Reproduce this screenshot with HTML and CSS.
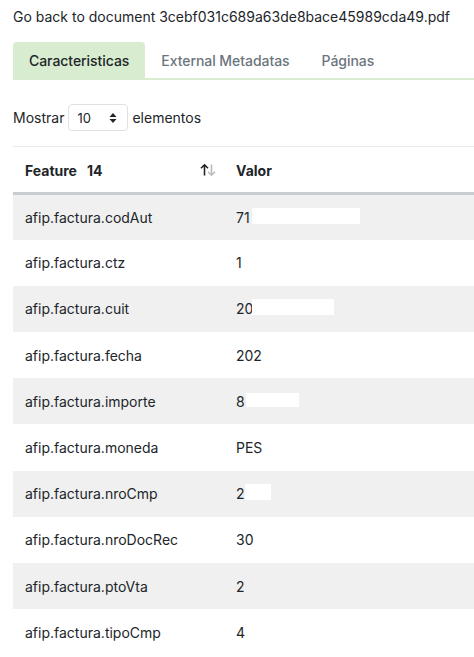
FILE: index.html
```html
<!DOCTYPE html>
<html lang="es">
<head>
<meta charset="utf-8">
<title>Document features</title>
<link rel="stylesheet" href="styles.css">
</head>
<body>
<div class="page">
  <div class="back">Go back to document <a class="doc-link" href="#">3cebf031c689a63de8bace45989cda49.pdf</a></div>
  <nav class="tabs">
    <a class="tab active" href="#">Caracteristicas</a>
    <a class="tab" href="#">External Metadatas</a>
    <a class="tab" href="#">Páginas</a>
  </nav>
  <div class="length">
    <span>Mostrar</span>
    <div class="select">
      <span>10</span>
      <svg class="caret" width="8" height="12" viewBox="0 0 8 12"><path d="M4 1 L7.5 5 L0.5 5 Z M4 11 L7.5 7 L0.5 7 Z" fill="#212529"/></svg>
    </div>
    <span>elementos</span>
  </div>
  <table class="grid">
    <thead>
      <tr>
        <th class="c1"><div class="th-in"><span>Feature&nbsp;&nbsp; 14</span>
          <svg class="sort" width="16" height="14" viewBox="0 0 16 14"><path d="M4.5 12.5 V2 M1 5.3 L4.5 1.8 L8 5.3" stroke="#212529" stroke-width="1.6" fill="none"/><path d="M11.5 1.5 V12 M8 8.7 L11.5 12.2 L15 8.7" stroke="#b8bbbf" stroke-width="1.6" fill="none"/></svg></div></th>
        <th class="c2">Valor</th>
      </tr>
    </thead>
    <tbody>
      <tr><td>afip.factura.codAut</td><td><span class="val">71<span class="mask m1"></span></span></td></tr>
      <tr><td>afip.factura.ctz</td><td>1</td></tr>
      <tr><td>afip.factura.cuit</td><td><span class="val">20<span class="mask m2"></span></span></td></tr>
      <tr><td>afip.factura.fecha</td><td>202</td></tr>
      <tr><td>afip.factura.importe</td><td><span class="val">8<span class="mask m3"></span></span></td></tr>
      <tr><td>afip.factura.moneda</td><td>PES</td></tr>
      <tr><td>afip.factura.nroCmp</td><td><span class="val">2<span class="mask m4"></span></span></td></tr>
      <tr><td>afip.factura.nroDocRec</td><td>30</td></tr>
      <tr><td>afip.factura.ptoVta</td><td>2</td></tr>
      <tr><td>afip.factura.tipoCmp</td><td>4</td></tr>
    </tbody>
  </table>
</div>
</body>
</html>
```
FILE: styles.css
```css
html, body {
  margin: 0;
  padding: 0;
  background: #ffffff;
}
body {
  font-family: Inter, "Noto Sans", sans-serif;
  font-size: 14px;
  color: #212529;
  overflow: hidden;
}
.page {
  padding: 7px 0 0 13px;
}
.back {
  line-height: 20px;
  color: #212529;
}
.doc-link {
  color: #212529;
  text-decoration: none;
}
.tabs {
  display: flex;
  margin-top: 15px;
  border-bottom: 2px solid #d8edcf;
}
.tab {
  display: block;
  padding: 0 16px;
  height: 36px;
  line-height: 38px;
  color: #6c757d;
  text-decoration: none;
  font-weight: 500;
  letter-spacing: -0.004em;
  border-radius: 4px 4px 0 0;
}
.tab.active {
  background: #d8edcf;
  color: #212529;
}
.length {
  display: flex;
  align-items: center;
  gap: 4px;
  margin-top: 24px;
  height: 27px;
}
.select {
  width: 60px;
  height: 27px;
  box-sizing: border-box;
  border: 1px solid #dee2e6;
  border-radius: 4px;
  display: flex;
  align-items: center;
  justify-content: space-between;
  padding: 0 10px 0 8px;
  font-size: 13px;
}
.caret { display: block; }
.grid {
  margin-top: 15px;
  width: 461px;
  border-collapse: collapse;
  border-top: 1px solid #e9e9e9;
}
.grid th {
  text-align: left;
  font-weight: 700;
  height: 47px;
  padding: 1px 12px 0;
  border-bottom: 3px solid #c9ccd1;
  box-sizing: border-box;
}
.grid th.c1 { width: 211px; }
.th-in {
  display: flex;
  align-items: center;
  justify-content: space-between;
}
.sort { display: block; margin-right: -4px; }
.grid td {
  height: 46.2px;
  padding: 0 12px;
  box-sizing: border-box;
  border-bottom: 0;
}
.grid tbody tr:nth-child(odd) td {
  background: #f0f0f0;
}
.val {
  position: relative;
  display: inline-block;
}
.mask {
  position: absolute;
  background: #ffffff;
  top: -1px;
  height: 16px;
}
.m1 { left: 16px; width: 108px; }
.m2 { left: 16px; width: 82px; }
.m3 { left: 10px; width: 53px; top: 0; height: 14px; }
.m4 { left: 9px; width: 26px; }
```
